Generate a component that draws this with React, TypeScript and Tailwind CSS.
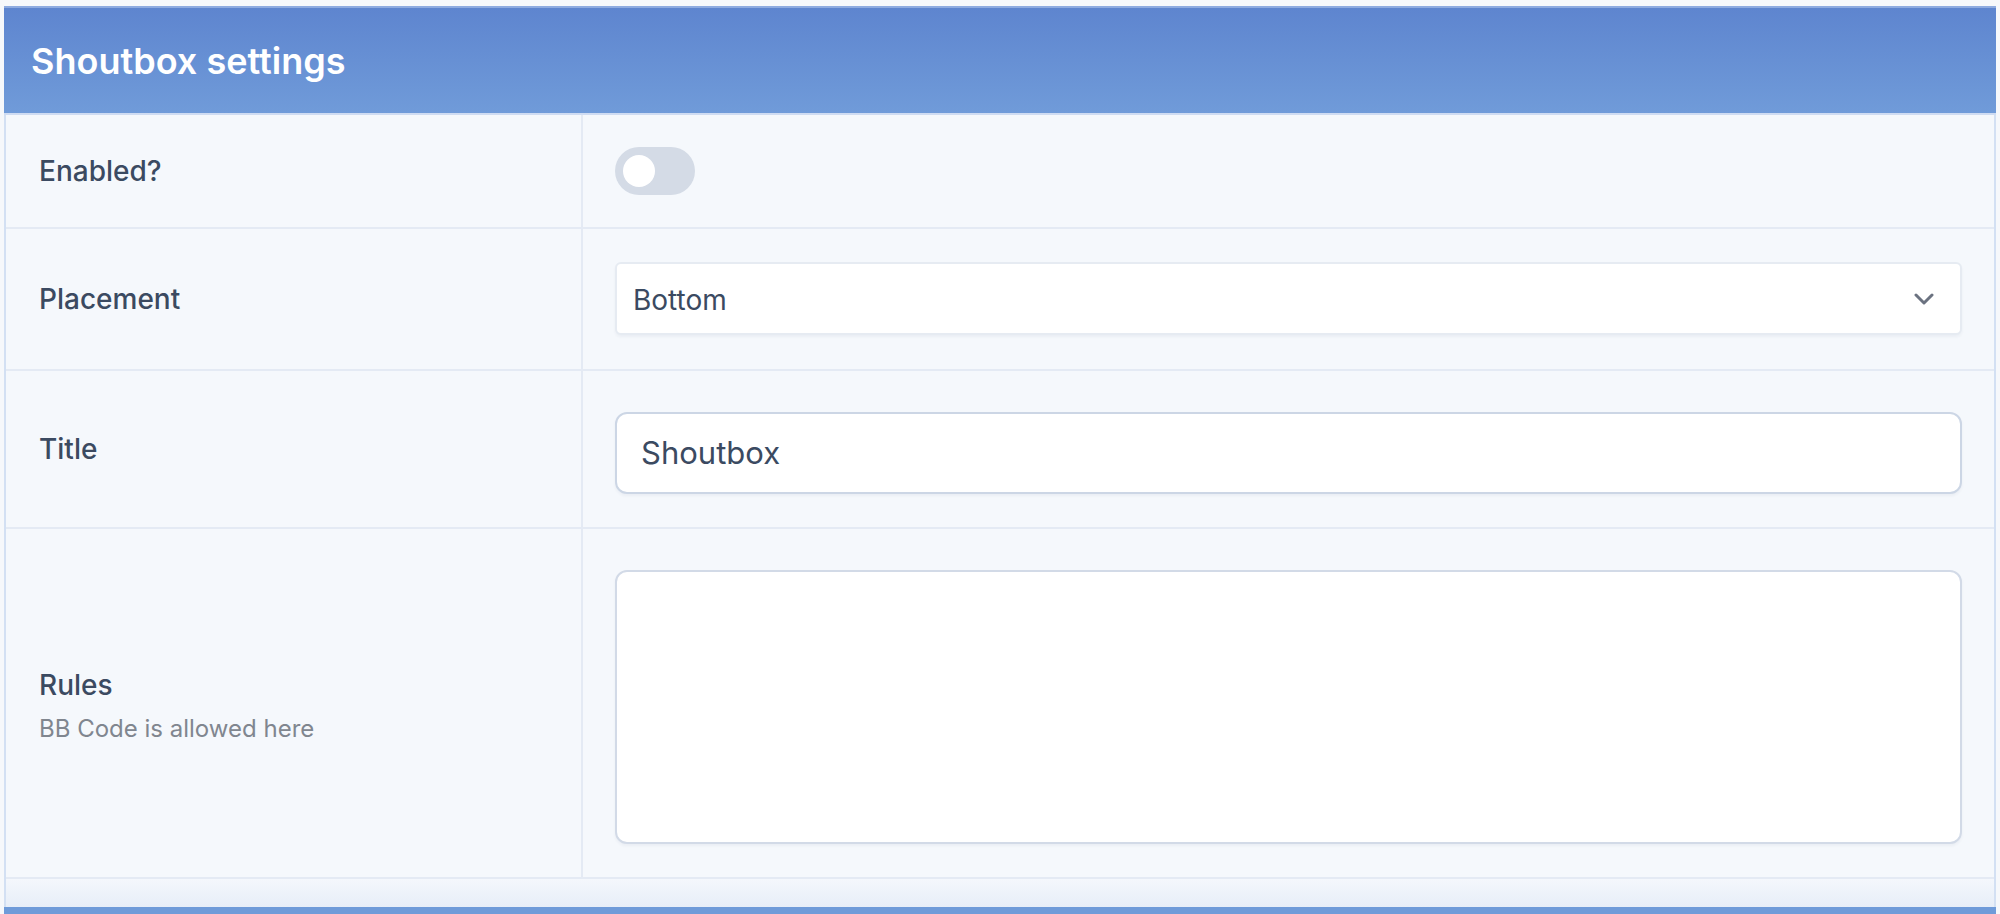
import React from 'react';

const Row: React.FC<{
  label: string;
  hint?: string;
  h: string;
  children: React.ReactNode;
}> = ({ label, hint, h, children }) => (
  <div className={`grid grid-cols-[577px_1fr] border-b-2 border-[#e4eaf4] ${h}`}>
    <div
      className={`flex flex-col justify-center border-r-2 border-[#e4eaf4] pl-[33px] ${hint ? 'pt-[5px]' : ''}`}
    >
      <span className="text-[28px] font-medium leading-[36px] text-[#3b4a61]">{label}</span>
      {hint && (
        <span className="mt-[11px] text-[24px] leading-[30px] text-[#80868f]">{hint}</span>
      )}
    </div>
    <div className="flex flex-col px-[32px]">{children}</div>
  </div>
);

export default function App() {
  return (
    <div
      className="min-h-[914px] bg-[#f6f8fb] px-[4px] pt-[6px]"
      style={{ fontFamily: 'Inter, "Noto Sans", sans-serif' }}
    >
      <div className="flex flex-col">
        {/* Header */}
        <div className="flex h-[109px] items-center border-t-2 border-b-2 border-t-[#8eabe0] border-b-[#cfdcf2] bg-gradient-to-b from-[#5e85cf] to-[#709bd9] pl-[27px]">
          <h2 className="text-[36px] font-semibold leading-none text-white">Shoutbox settings</h2>
        </div>

        {/* Body */}
        <div className="border-x-2 border-[#d3e0f3] bg-[#f5f8fc]">
          <Row label="Enabled?" h="h-[114px]">
            <div className="flex h-full items-center">
              <button className="h-[48px] w-[80px] rounded-full bg-[#d4dbe6] p-[8px]">
                <div className="h-[32px] w-[32px] rounded-full bg-white" />
              </button>
            </div>
          </Row>

          <Row label="Placement" h="h-[142px]">
            <div className="pt-[33px]">
              <div className="flex h-[73px] items-center justify-between rounded-[6px] border-2 border-[#e6ebf2] bg-white pl-[16px] pr-[26px] shadow-[0_2px_3px_rgba(30,50,90,0.05)]">
                <span className="pt-[3px] text-[28px] leading-none text-[#3b4a61]">Bottom</span>
                <svg width="20" height="12" viewBox="0 0 20 12" fill="none">
                  <path d="M2 2l8 8 8-8" stroke="#6b7280" strokeWidth="3" strokeLinecap="round" strokeLinejoin="round" />
                </svg>
              </div>
            </div>
          </Row>

          <Row label="Title" h="h-[158px]">
            <div className="pt-[41px]">
              <div className="flex h-[82px] items-center rounded-[12px] border-2 border-[#ccd6e5] bg-white pl-[24px] shadow-[0_2px_3px_rgba(30,50,90,0.05)]">
                <span className="text-[31px] text-[#3b4a61]">Shoutbox</span>
              </div>
            </div>
          </Row>

          <Row label="Rules" hint="BB Code is allowed here" h="h-[350px]">
            <div className="pt-[41px]">
              <div className="h-[274px] rounded-[12px] border-2 border-[#d2dae7] bg-white shadow-[0_2px_3px_rgba(30,50,90,0.05)]" />
            </div>
          </Row>

          {/* Footer */}
          <div className="h-[28px] bg-gradient-to-b from-[#f4f7fc] to-[#e7eef8]" />
        </div>
        <div className="h-[7px] bg-[#6f9bd9]" />
      </div>
    </div>
  );
}
